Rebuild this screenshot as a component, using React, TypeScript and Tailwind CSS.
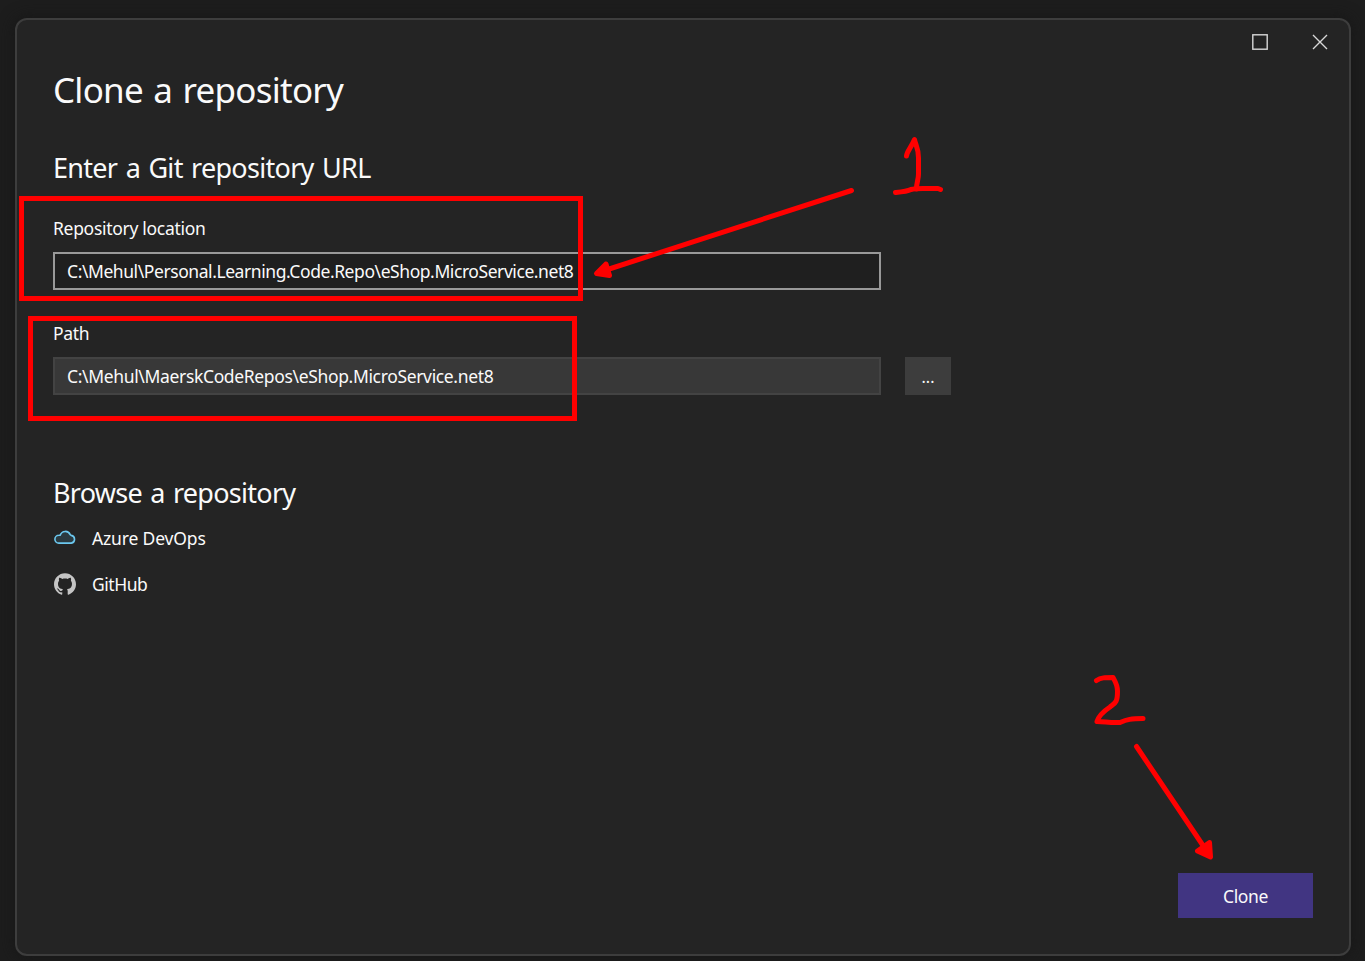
import { SiGithub } from "react-icons/si";

function Field({ label, value, active }: { label: string; value: string; active?: boolean }) {
  return (
    <label className="flex w-[828px] flex-col gap-3">
      <span className="h-6 text-[17.5px] leading-6 tracking-[-0.3px]">{label}</span>
      <span
        className={
          active
            ? "flex h-[38px] items-center border-2 border-[#999999] bg-[#1f1f1f] px-3 text-[17.5px] tracking-[-0.43px] whitespace-nowrap"
            : "flex h-[38px] items-center border-2 border-[#434343] bg-[#383838] px-3 text-[17.5px] tracking-[-0.35px] whitespace-nowrap"
        }
      >
        {value}
      </span>
    </label>
  );
}

function CloudIcon() {
  return (
    <svg className="mb-0.5" width="22" height="14" viewBox="0 0 22 14" fill="#2b3a40" stroke="#6cc8ef" strokeWidth="1.6" strokeLinejoin="round">
      <path d="M4.8 13.1A3.9 3.9 0 0 1 4.8 5.3L6.3 5.1A5.3 5.3 0 0 1 16.2 4.6L17.2 5.4A3.9 3.9 0 0 1 17.3 13.1Z" />
    </svg>
  );
}

function Annotations() {
  return (
    <>
      <div className="absolute top-[196px] left-[19px] h-[105px] w-[564px] border-5 border-[#ff0000]" />
      <div className="absolute top-[316px] left-[28px] h-[105px] w-[549px] border-5 border-[#ff0000]" />
      <svg
        className="absolute top-0 left-0"
        width="1365"
        height="961"
        fill="none"
        stroke="#ff0000"
        strokeWidth="5"
        strokeLinecap="round"
        strokeLinejoin="round"
      >
        <path d="M851.5 190.5L603 271" />
        <path d="M606 264L596.500 273.500L609.500 275.500Z" fill="#ff0000" />
        <path d="M906.500 156C907 151 911 148 914.500 139.500C915.500 145 918.500 148 918.500 158V174C918.500 180 916.500 182 916.500 189" />
        <path d="M895.500 192.500C901 192 907 191.500 911 189.500C916 188 923 188.500 929 188.500H938L940.500 189.500" />
        <path d="M1096.500 680.500C1101 677.500 1105 677.500 1113 677.500C1116 683 1117.500 685 1117.500 691C1117.500 703 1115 703 1110 707C1104 711 1099 715 1097 721.500C1105 721.500 1109 723 1120 722.500C1127 719.500 1131 718.500 1143 718.500" />
        <path d="M1136.500 746.500L1206 850" />
        <path d="M1197.500 851L1210.500 857L1209.500 842.500Z" fill="#ff0000" />
      </svg>
    </>
  );
}

export default function App() {
  return (
    <div className="relative h-[961px] w-[1365px] overflow-hidden bg-[#1d1d1d] px-[14px] pt-[18px] pl-[15px] font-['Noto_Sans',sans-serif] [font-weight:370] text-[#fafafa]">
      <main className="flex h-[938px] w-[1336px] flex-col rounded-xl border-2 border-[#3d3d3d] bg-[#242424] shadow-[0_0_16px_#161616]">
        <header className="flex h-[45px] justify-end gap-[44px] pt-[14px] pr-[21px]">
          <button aria-label="Maximize" className="h-4 w-4">
            <svg width="16" height="16" fill="none" stroke="#d8d8d8" strokeWidth="1.4">
              <rect x="0.8" y="0.8" width="14.4" height="14.4" />
            </svg>
          </button>
          <button aria-label="Close" className="h-4 w-4">
            <svg width="16" height="16" stroke="#d8d8d8" strokeWidth="1.4">
              <path d="M1 1L15 15M15 1L1 15" />
            </svg>
          </button>
        </header>
        <div className="flex flex-1 flex-col pr-9 pb-9 pl-9">
          <h1 className="h-12 pt-px [font-weight:370] text-[35px] leading-[48px] tracking-[-0.75px] [word-spacing:2px]">Clone a repository</h1>
          <h2 className="mt-9 h-9 pt-px [font-weight:370] text-[27px] leading-9 tracking-[-0.7px] [word-spacing:2px]">Enter a Git repository URL</h2>
          <div className="mt-[31px] flex flex-col gap-[31px]">
            <Field label="Repository location" value="C:\Mehul\Personal.Learning.Code.Repo\eShop.MicroService.net8" active />
            <div className="flex items-end gap-6">
              <Field label="Path" value="C:\Mehul\MaerskCodeRepos\eShop.MicroService.net8" />
              <button className="h-[38px] w-[46px] bg-[#3d3d3d] pt-px text-[16px] leading-[38px]">...</button>
            </div>
          </div>
          <h2 className="mt-[79px] h-9 pt-px [font-weight:370] text-[27px] leading-9 tracking-[-0.73px] [word-spacing:2px]">Browse a repository</h2>
          <ul className="mt-4 flex flex-col gap-[22px] text-[17.5px] leading-6">
            <li className="flex h-6 items-center gap-4 pl-px tracking-[-0.15px]">
              <CloudIcon />
              Azure DevOps
            </li>
            <li className="flex h-6 items-center gap-4 pl-px tracking-[-0.45px]">
              <SiGithub size={22} color="#c5c5c5" />
              GitHub
            </li>
          </ul>
          <button className="mt-auto h-[45px] w-[135px] self-end bg-[#413582] pt-0.5 text-[17.5px] leading-[43px] tracking-[-0.35px]">Clone</button>
        </div>
      </main>
      <Annotations />
    </div>
  );
}
